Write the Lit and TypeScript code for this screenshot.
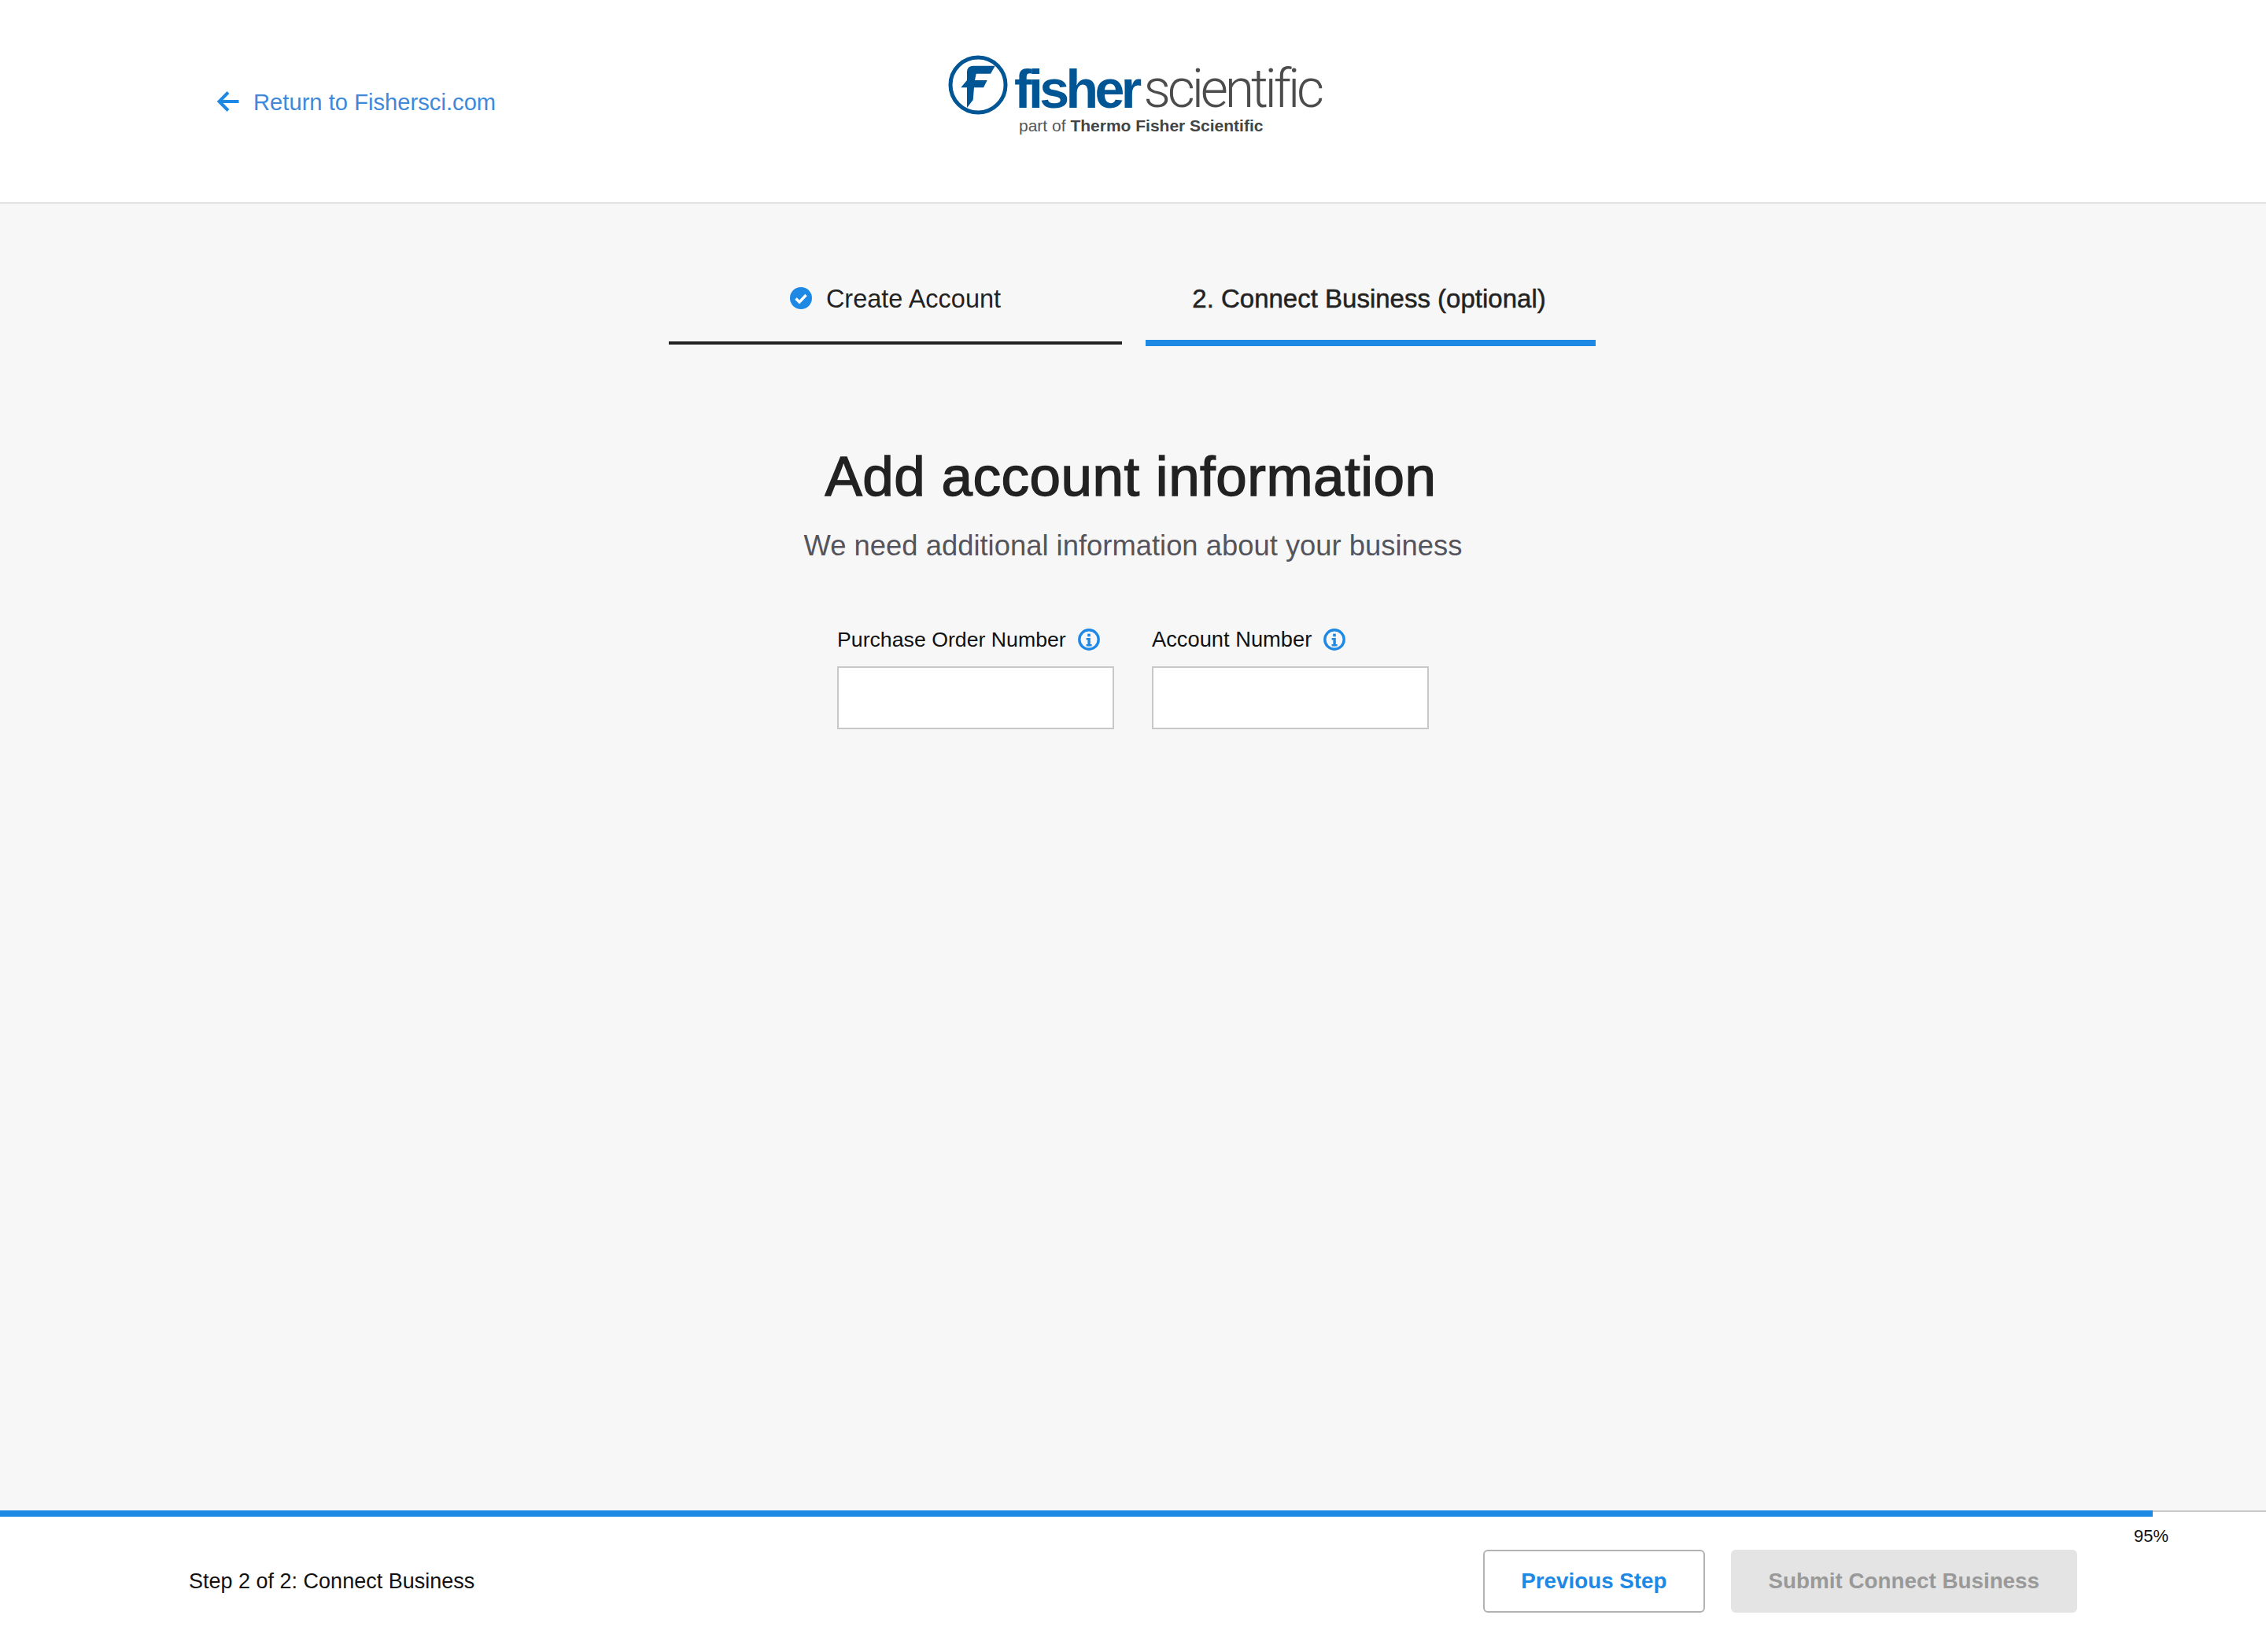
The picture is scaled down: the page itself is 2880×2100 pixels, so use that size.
import { LitElement, html, css, svg } from "lit";
import { customElement } from "lit/decorators.js";

const infoIcon = html`<svg class="info" viewBox="0 0 28 28" width="28" height="28" aria-hidden="true">
  <circle cx="14" cy="14" r="12.2" fill="none" stroke="#1e88e5" stroke-width="3.4"></circle>
  <rect x="12.2" y="6.600" width="3.6" height="3.6" fill="#1e88e5"></rect>
  <path d="M10.600 12h5.200v8h1.800v2.400h-7V20h1.800v-5.600h-1.800z" fill="#1e88e5"></path>
</svg>`;

@customElement("app-root")
export class AppRoot extends LitElement {
  static styles = css`
    :host {
      display: flex;
      flex-direction: column;
      height: 2100px;
      font-family: "Liberation Sans", Arial, sans-serif;
      background: #f7f7f7;
      color: #222;
    }
    header {
      box-sizing: border-box;
      height: 259px;
      background: #fff;
      border-bottom: 2px solid #e2e2e2;
      display: grid;
      grid-template-columns: 1fr auto 1fr;
      align-items: center;
    }
    .back {
      display: flex;
      align-items: center;
      gap: 18px;
      padding-left: 276px;
      padding-top: 1px;
      font-size: 29.2px;
      color: #4088da;
      text-decoration: none;
    }
    .back span {
      margin-top: 2px;
    }
    .logo {
      width: 470px;
      height: 116px;
      display: flex;
      flex-direction: column;
      margin-top: -8px;
    }
    .logo-top {
      display: flex;
      align-items: center;
      height: 82px;
    }
    .mark {
      flex: none;
      margin-right: 8px;
    }
    .fisher {
      font-size: 68px;
      font-weight: 700;
      color: #005595;
      letter-spacing: -4.6px;
      line-height: 82px;
      margin-top: 10px;
    }
    .scientific {
      font-family: Roboto, "Liberation Sans", sans-serif;
      font-weight: 300;
      font-size: 68px;
      color: #4c4c4c;
      letter-spacing: -4.2px;
      line-height: 82px;
      margin-top: 10px;
      margin-left: 7px;
    }
    .part {
      font-size: 21px;
      color: #555;
      padding-left: 90px;
      margin-top: -2px;
      line-height: 26px;
    }
    .part b {
      color: #444;
    }
    main {
      flex: 1;
      display: flex;
      flex-direction: column;
      align-items: center;
    }
    .steps {
      display: flex;
      gap: 30px;
      margin: 84px 2px 0 0;
      height: 97px;
    }
    .step {
      box-sizing: border-box;
      display: flex;
      align-items: flex-start;
      justify-content: center;
      gap: 18px;
      padding-top: 18px;
      line-height: 38px;
      color: #222;
    }
    .done {
      width: 576px;
      height: 95px;
      font-size: 32.5px;
      border-bottom: 4px solid #222;
    }
    .active {
      width: 572px;
      padding-right: 4px;
      font-size: 33px;
      border-bottom: 8px solid #1e88e5;
      -webkit-text-stroke: 0.5px #222;
    }
    .check {
      margin-top: 4px;
    }
    h1 {
      margin: 126px 0 0;
      font-size: 71px;
      letter-spacing: 0.5px;
      line-height: 80px;
      font-weight: 400;
      -webkit-text-stroke: 1.4px #222;
      color: #222;
      padding-right: 6px;
    }
    .sub {
      margin: 26px 0 0;
      font-size: 36.4px;
      line-height: 44px;
      color: #54545c;
    }
    .form {
      display: flex;
      gap: 48px;
      margin-top: 80px;
    }
    .field {
      width: 352px;
    }
    .label {
      display: flex;
      align-items: center;
      gap: 15px;
      height: 34px;
      color: #111;
      margin-bottom: 17px;
    }
    .po {
      font-size: 26.7px;
    }
    .acct {
      font-size: 27.3px;
    }
    input {
      display: block;
      box-sizing: border-box;
      width: 352px;
      height: 80px;
      border: 2px solid #c8c8c8;
      background: #fff;
      outline: none;
      padding: 0 16px;
    }
    footer {
      position: relative;
      height: 180px;
      background: #fff;
      display: flex;
      flex-direction: column;
    }
    .track {
      height: 8px;
      display: flex;
      align-items: flex-start;
    }
    .fill {
      height: 8px;
      background: #1e88e5;
    }
    .rest {
      flex: 1;
      height: 2px;
      background: #c8c8c8;
    }
    .pct {
      position: absolute;
      left: 2712px;
      top: 20px;
      font-size: 22px;
      line-height: 26px;
      color: #111;
    }
    .bar {
      flex: 1;
      display: flex;
      align-items: flex-start;
      justify-content: space-between;
      padding: 42px 240px 0 240px;
    }
    .label-step {
      font-size: 27px;
      line-height: 80px;
      color: #111;
    }
    .buttons {
      display: flex;
      gap: 33px;
    }
    button {
      box-sizing: border-box;
      height: 80px;
      border-radius: 6px;
      font-family: inherit;
      font-size: 27.8px;
      font-weight: 700;
      padding: 0 46px;
    }
    .prev {
      background: #fff;
      border: 2px solid #b2b2b2;
      color: #1e88e5;
    }
    .submit {
      background: #e4e4e4;
      border: none;
      color: #999;
      padding: 0 48px;
    }
  `;

  render() {
    const pct = 95;
    return html`
      <header>
        <a class="back" href="#">
          <svg width="28" height="26" viewBox="0 0 28 26" aria-hidden="true">
            <path d="M27.500 13H3.500M14 1.500 2.500 13 14 24.500" fill="none" stroke="#1e88e5" stroke-width="4"></path>
          </svg>
          <span>Return to Fishersci.com</span>
        </a>
        <div class="logo">
          <div class="logo-top">
            <svg class="mark" width="76" height="76" viewBox="0 0 76 76" aria-hidden="true">
              <circle cx="38" cy="38" r="35" fill="none" stroke="#005595" stroke-width="5"></circle>
              ${svg`<path d="M24 21Q24.500 13.700 32 13.700H59.700L54 23.700H35.700L34 32H49.700L45 41.300H33L31.700 57L24 67V41.300H16.300L24 32Z" fill="#005595"></path>`}
            </svg>
            <span class="fisher">fisher</span><span class="scientific">scientific</span>
          </div>
          <div class="part">part of <b>Thermo Fisher Scientific</b></div>
        </div>
        <div></div>
      </header>
      <main>
        <div class="steps">
          <div class="step done">
            <svg class="check" width="28" height="28" viewBox="0 0 28 28" aria-hidden="true">
              <circle cx="14" cy="14" r="14" fill="#1e88e5"></circle>
              <path d="M7.500 14.500 12 19l8.500-9" fill="none" stroke="#fff" stroke-width="3.400"></path>
            </svg>
            <span>Create Account</span>
          </div>
          <div class="step active"><span>2. Connect Business (optional)</span></div>
        </div>
        <h1>Add account information</h1>
        <p class="sub">We need additional information about your business</p>
        <div class="form">
          <div class="field">
            <div class="label"><span class="po">Purchase Order Number</span>${infoIcon}</div>
            <input type="text" aria-label="Purchase Order Number" />
          </div>
          <div class="field">
            <div class="label"><span class="acct">Account Number</span>${infoIcon}</div>
            <input type="text" aria-label="Account Number" />
          </div>
        </div>
      </main>
      <footer>
        <div class="track">
          <div class="fill" style="width:${pct}%"></div>
          <div class="rest"></div>
        </div>
        <div class="pct">${pct}%</div>
        <div class="bar">
          <div class="label-step">Step 2 of 2: Connect Business</div>
          <div class="buttons">
            <button class="prev">Previous Step</button>
            <button class="submit">Submit Connect Business</button>
          </div>
        </div>
      </footer>
    `;
  }
}
